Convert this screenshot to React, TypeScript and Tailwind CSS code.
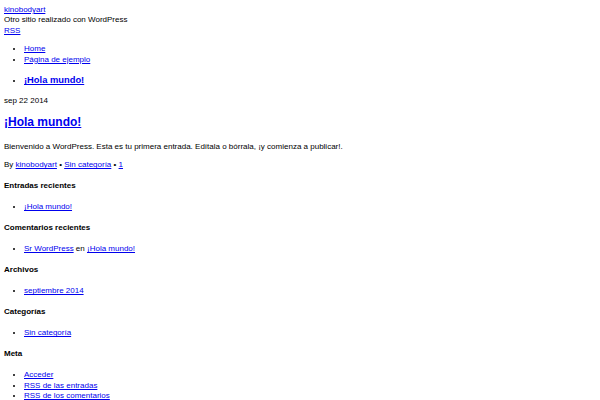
import React from "react";

const A = ({ children }: { children: React.ReactNode }) => (
  <a href="#" className="text-[#0000ee] underline">
    {children}
  </a>
);

const UL = ({ children }: { children: React.ReactNode }) => (
  <ul className="list-disc pl-[20px] my-[8px]">{children}</ul>
);

const H4 = ({ children }: { children: React.ReactNode }) => (
  <h4 className="text-[8px] font-bold my-[10.64px]">{children}</h4>
);

export default function App() {
  return (
    <div className="min-h-screen bg-white px-[4px] pt-[5px] pb-[4px] font-['Liberation_Sans',Arial,sans-serif] text-[8px] leading-[1.3] text-black">
      <div>
        <A>kinobodyart</A>
      </div>
      <div>Otro sitio realizado con WordPress</div>
      <div>
        <A>RSS</A>
      </div>
      <UL>
        <li>
          <A>Home</A>
        </li>
        <li>
          <A>Página de ejemplo</A>
        </li>
      </UL>
      <UL>
        <li>
          <h3 className="text-[9.36px] font-bold my-[9.36px]">
            <A>¡Hola mundo!</A>
          </h3>
        </li>
      </UL>
      <div>sep 22 2014</div>
      <h2 className="text-[12px] font-bold mt-[9px] mb-[11px]">
        <A>¡Hola mundo!</A>
      </h2>
      <p className="my-[8px]">
        Bienvenido a WordPress. Esta es tu primera entrada. Edítala o bórrala, ¡y comienza a publicar!.
      </p>
      <p className="my-[8px]">
        By <A>kinobodyart</A> • <A>Sin categoría</A> • <A>1</A>
      </p>
      <H4>Entradas recientes</H4>
      <UL>
        <li>
          <A>¡Hola mundo!</A>
        </li>
      </UL>
      <H4>Comentarios recientes</H4>
      <UL>
        <li>
          <A>Sr WordPress</A> en <A>¡Hola mundo!</A>
        </li>
      </UL>
      <H4>Archivos</H4>
      <UL>
        <li>
          <A>septiembre 2014</A>
        </li>
      </UL>
      <H4>Categorías</H4>
      <UL>
        <li>
          <A>Sin categoría</A>
        </li>
      </UL>
      <H4>Meta</H4>
      <UL>
        <li>
          <A>Acceder</A>
        </li>
        <li>
          <A>RSS de las entradas</A>
        </li>
        <li>
          <A>RSS de los comentarios</A>
        </li>
      </UL>
    </div>
  );
}
